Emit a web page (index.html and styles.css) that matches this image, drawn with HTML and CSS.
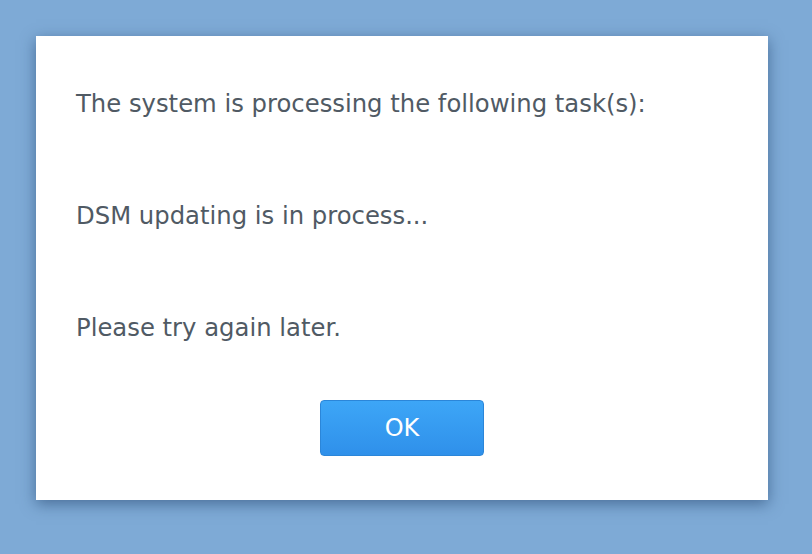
FILE: index.html
```html
<!DOCTYPE html>
<html>
<head>
<meta charset="utf-8">
<link rel="stylesheet" href="styles.css">
</head>
<body>
<div class="dialog">
  <p class="msg">The system is processing the following task(s):</p>
  <p class="msg">DSM updating is in process...</p>
  <p class="msg">Please try again later.</p>
  <div class="actions"><button class="ok">OK</button></div>
</div>
</body>
</html>
```
FILE: styles.css
```css
html, body { margin: 0; padding: 0; }
body {
  width: 812px; height: 554px;
  background: #7eaad6;
  font-family: "DejaVu Sans", Verdana, sans-serif;
  padding: 36px;
  box-sizing: border-box;
}
.dialog {
  width: 732px; height: 464px;
  background: #fff;
  box-shadow: 0 4px 14px rgba(30, 60, 100, 0.55);
  box-sizing: border-box;
  padding: 54px 40px 0 40px;
  display: flex; flex-direction: column;
}
.msg {
  margin: 0 0 84px 0;
  font-size: 24.3px;
  line-height: 28px;
  color: #505a64;
}
.msg:nth-of-type(3) { margin-bottom: 58px; }
.actions { display: flex; justify-content: center; }
.ok {
  width: 164px; height: 56px;
  border: 1px solid #2b86d9;
  border-radius: 4px;
  background: linear-gradient(#3da6f7, #2f90ea);
  color: #fff;
  font-family: "DejaVu Sans", Verdana, sans-serif;
  font-size: 24px;
  margin-left: 0;
}
```
